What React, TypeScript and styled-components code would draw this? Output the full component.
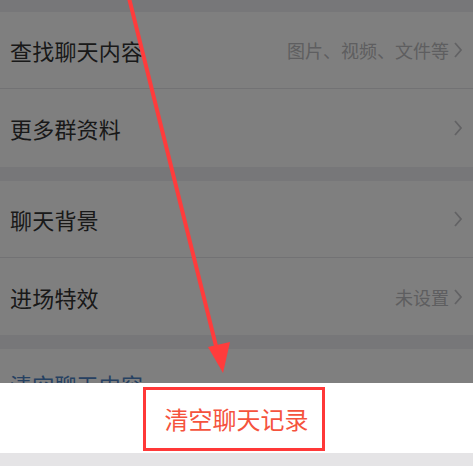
import React from 'react';
import styled, { createGlobalStyle } from 'styled-components';

const GlobalStyle = createGlobalStyle`
  html, body {
    margin: 0;
    padding: 0;
    background: #ffffff;
  }
  body {
    font-family: "Noto Sans CJK SC", "Noto Sans", sans-serif;
  }
`;

const Screen = styled.div`
  position: relative;
  width: 473px;
  height: 472px;
  overflow: hidden;
  background: #eeeef2;
`;

const List = styled.div`
  display: flex;
  flex-direction: column;
`;

const Gap = styled.div<{ $h: number }>`
  height: ${(p) => p.$h}px;
  background: #eeeef2;
`;

const Row = styled.div<{ $h: number; $divider?: boolean }>`
  height: ${(p) => p.$h}px;
  background: #ffffff;
  display: flex;
  align-items: center;
  padding: 0 10px;
  box-sizing: border-box;
  border-bottom: ${(p) => (p.$divider ? '1px solid #e4e4e8' : 'none')};
`;

const Title = styled.span<{ $danger?: boolean }>`
  font-size: 22px;
  color: ${(p) => (p.$danger ? '#4d82c4' : '#333333')};
  flex: 1;
  letter-spacing: 0.2px;
`;

const Detail = styled.span`
  font-size: 18px;
  color: #bcbcc0;
  margin-right: 4px;
`;

const Chevron = styled.svg`
  width: 10px;
  height: 18px;
  flex: none;
`;

const Dim = styled.div`
  position: absolute;
  inset: 0;
  background: rgba(0, 0, 0, 0.5);
`;

const Sheet = styled.div`
  position: absolute;
  left: 0;
  right: 0;
  top: 383px;
  display: flex;
  flex-direction: column;
  background: #e5e4e6;
`;

const SheetButton = styled.div<{ $danger?: boolean }>`
  height: 70px;
  background: #ffffff;
  display: flex;
  align-items: center;
  justify-content: center;
  font-size: 24px;
  color: ${(p) => (p.$danger ? '#f5533d' : '#333333')};
`;

const SheetGap = styled.div`
  height: 13px;
`;

const Highlight = styled.div`
  position: absolute;
  left: 143px;
  top: 387px;
  width: 182px;
  height: 64px;
  box-sizing: border-box;
  border: 3px solid #ff3838;
`;

const Arrow = styled.svg`
  position: absolute;
  inset: 0;
  width: 473px;
  height: 472px;
  pointer-events: none;
`;

const Arrowhead = () => (
  <Chevron viewBox="0 0 10 18">
    <path d="M2 2 L8 9 L2 16" fill="none" stroke="#c4c4c8" strokeWidth="1.8" />
  </Chevron>
);

const rows = [
  { gap: 12 },
  { title: '查找聊天内容', detail: '图片、视频、文件等', h: 77, divider: true },
  { title: '更多群资料', h: 78 },
  { gap: 14 },
  { title: '聊天背景', h: 77, divider: true },
  { title: '进场特效', detail: '未设置', h: 77 },
  { gap: 14 },
];

const App: React.FC = () => {
  return (
    <>
      <GlobalStyle />
      <Screen>
        <List>
          {rows.map((r, i) =>
            'gap' in r ? (
              <Gap key={i} $h={r.gap as number} />
            ) : (
              <Row key={i} $h={r.h as number} $divider={r.divider}>
                <Title>{r.title}</Title>
                {r.detail && <Detail>{r.detail}</Detail>}
                <Arrowhead />
              </Row>
            )
          )}
          <Row $h={70}>
            <Title $danger>清空聊天内容</Title>
          </Row>
        </List>
        <Dim />
        <Sheet>
          <SheetButton $danger>清空聊天记录</SheetButton>
          <SheetGap />
          <SheetButton />
        </Sheet>
        <Highlight />
        <Arrow viewBox="0 0 473 472">
          <line x1="129" y1="-2" x2="217" y2="350" stroke="#ff3c3c" strokeWidth="4" />
          <polygon points="208,347 230,342 223,373" fill="#ff3c3c" />
        </Arrow>
      </Screen>
    </>
  );
};

export default App;
